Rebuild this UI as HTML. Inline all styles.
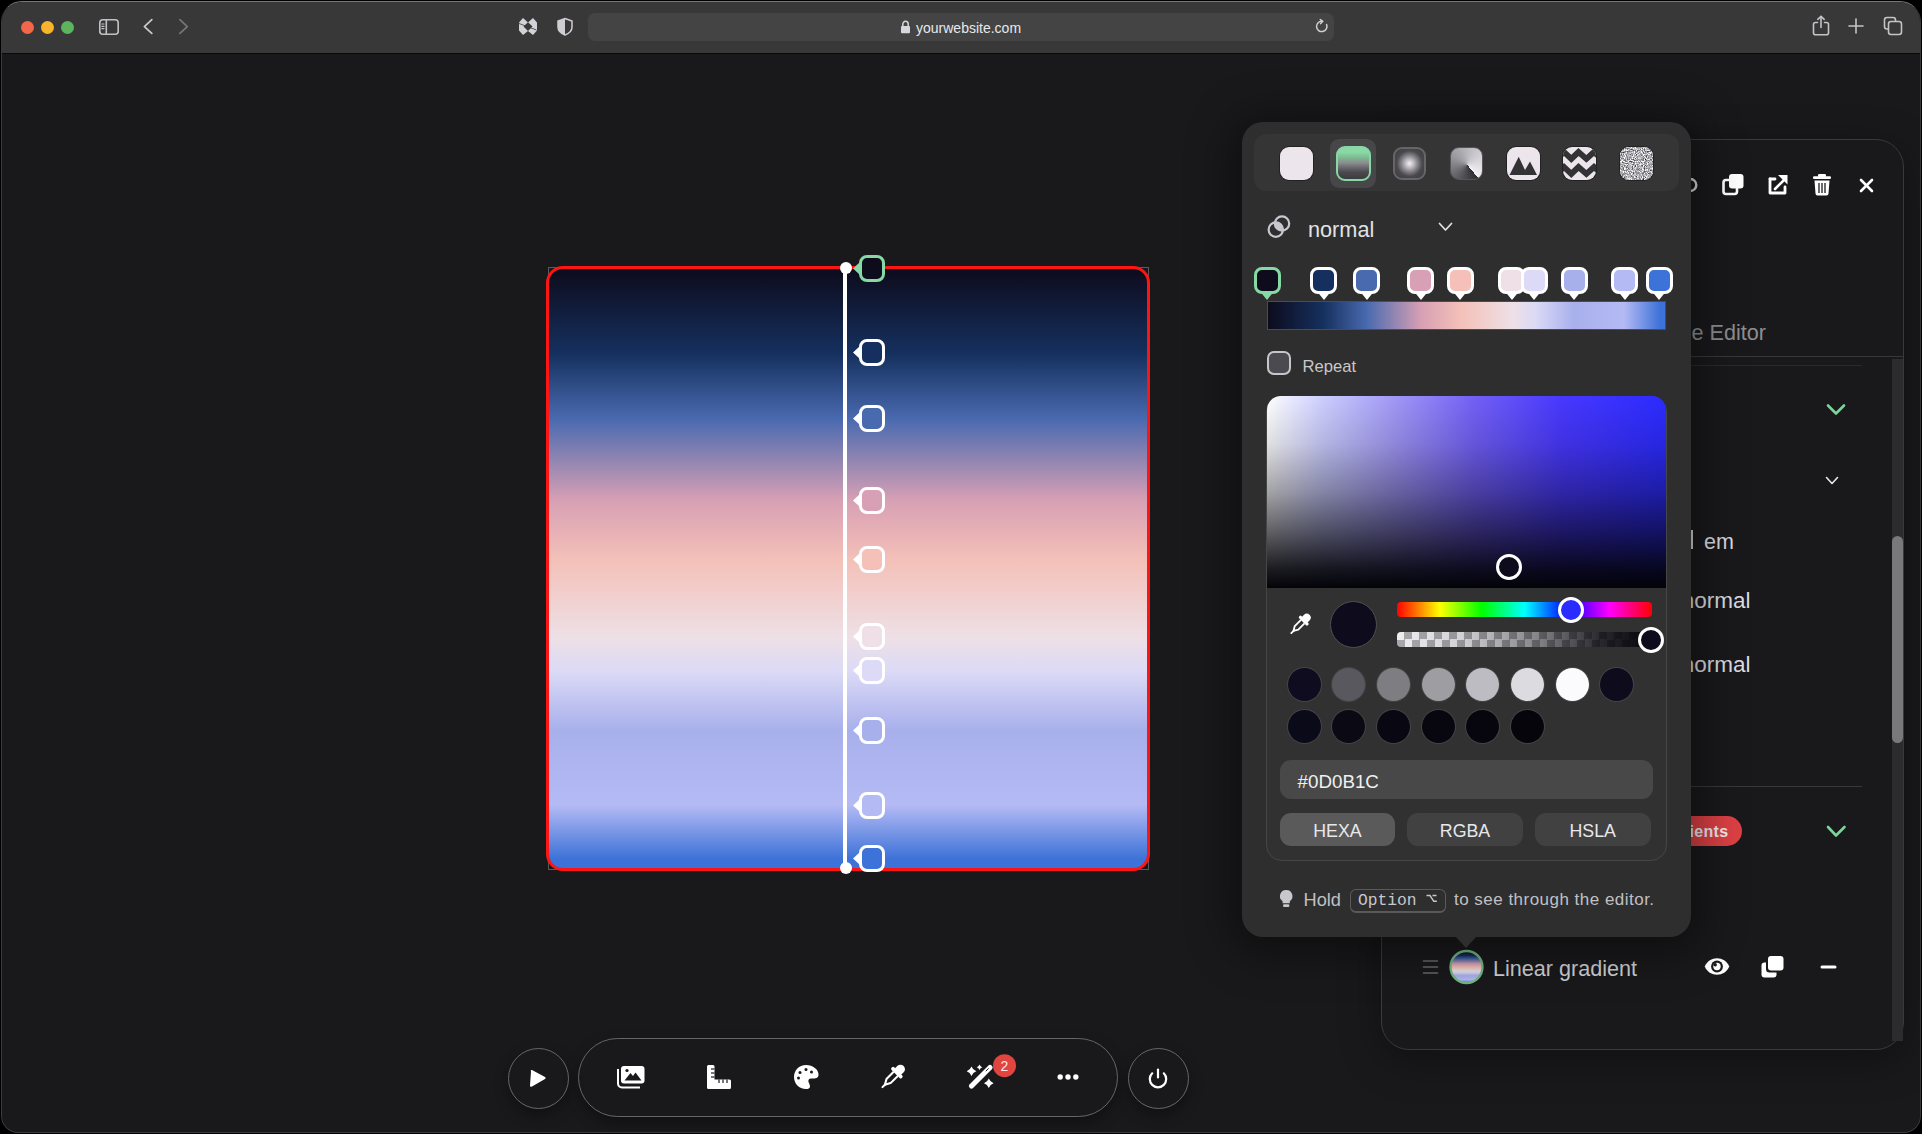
<!DOCTYPE html>
<html><head><meta charset="utf-8">
<style>
*{box-sizing:border-box;margin:0;padding:0}
html,body{width:1922px;height:1134px;overflow:hidden;background:#000;font-family:"Liberation Sans",sans-serif}
.a{position:absolute}
#win{position:absolute;left:1px;top:1px;width:1920px;height:1132px;border-radius:21px 21px 17px 17px;overflow:hidden;background:#19191b;border:1px solid #3a3a3c;border-top-color:#77777b}
#tb{position:absolute;left:0;top:0;width:1918px;height:51px;background:#383838}
#tbline{position:absolute;left:0;top:51px;width:1918px;height:1px;background:#08080c}
.tl{position:absolute;width:13px;height:13px;border-radius:50%}
svg{position:absolute;overflow:visible}
.t{position:absolute;white-space:nowrap;line-height:1}
</style></head><body>
<div id="win"><div id="tb"></div><div id="tbline"></div></div>
<!-- ============ BROWSER TOOLBAR ============ -->
<div class="tl" style="left:21px;top:21px;background:#f2674a"></div>
<div class="tl" style="left:41px;top:21px;background:#f7b42c"></div>
<div class="tl" style="left:61px;top:21px;background:#5cb45e"></div>
<div class="a" style="left:588px;top:13px;width:746px;height:28px;border-radius:7px;background:#444444"></div>
<div class="t" style="left:916px;top:20.5px;font-size:14px;color:#e8e8ea;">yourwebsite.com</div>
<svg style="left:0;top:0" width="1922" height="60">
  <g fill="none" stroke="#c2c2c6" stroke-width="1.6" stroke-linecap="round" stroke-linejoin="round">
    <rect x="99.8" y="19.8" width="18.4" height="14.4" rx="3"/>
    <line x1="106.3" y1="20" x2="106.3" y2="34"/>
    <line x1="101.8" y1="24" x2="104" y2="24" stroke-width="1.2"/>
    <line x1="101.8" y1="26.3" x2="104" y2="26.3" stroke-width="1.2"/>
    <line x1="101.8" y1="28.6" x2="104" y2="28.6" stroke-width="1.2"/>
    <polyline points="151.8,19.6 144.4,26.6 151.8,33.4" stroke="#c8c8cc" stroke-width="1.8"/>
    <polyline points="179.9,19.6 187.3,26.6 179.9,33.4" stroke="#76767a" stroke-width="1.8"/>
  </g>
  <path d="M523,18 L528,22.5 L533,18 L537,22.5 L537,30.5 L533,35 L528,31 L523,35 L519,30.5 L519,22.5 Z" fill="#d4d2d8"/>
  <polygon points="523.5,26.5 528,22.3 532.5,26.5 528,31" fill="#383838"/>
  <line x1="519" y1="23.5" x2="536.5" y2="30" stroke="#383838" stroke-width="0.8"/>
  <path d="M565,18.5 L572,21 L572,27 C572,31 569,33.5 565,35 C561,33.5 558,31 558,27 L558,21 Z" fill="none" stroke="#cfcdd3" stroke-width="1.5"/>
  <path d="M565,18.5 L558,21 L558,27 C558,31 561,33.5 565,35 Z" fill="#cfcdd3"/>
  <rect x="901" y="26" width="9" height="7.3" rx="1" fill="#d8d8dc"/>
  <path d="M902.8,26.5 V24.2 A2.7,2.9 0 0 1 908.2,24.2 V26.5" fill="none" stroke="#d8d8dc" stroke-width="1.5"/>
  <path d="M1326.6,24.5 A5.2,5.2 0 1 1 1322.2,21.2" fill="none" stroke="#d0d0d4" stroke-width="1.5" stroke-linecap="round"/>
  <polyline points="1320.3,19.6 1322.8,21.3 1320.6,23.6" fill="none" stroke="#d0d0d4" stroke-width="1.5" stroke-linecap="round" stroke-linejoin="round"/>
  <g fill="none" stroke="#c4c4c8" stroke-width="1.6" stroke-linecap="round" stroke-linejoin="round">
    <path d="M1817.5,22.5 H1815.5 A2,2 0 0 0 1813.5,24.5 V32.7 A2,2 0 0 0 1815.5,34.7 H1826.5 A2,2 0 0 0 1828.5,32.7 V24.5 A2,2 0 0 0 1826.5,22.5 H1824.5"/>
    <line x1="1821" y1="16.5" x2="1821" y2="27.5"/>
    <polyline points="1817.8,19.3 1821,16.3 1824.2,19.3"/>
    <line x1="1856" y1="19" x2="1856" y2="33"/>
    <line x1="1849" y1="26" x2="1863" y2="26"/>
    <rect x="1884.5" y="17.5" width="11" height="11.5" rx="2.5"/>
    <rect x="1888.5" y="21.5" width="13" height="13" rx="2.5" fill="#383838"/>
  </g>
</svg>
<!-- ============ CANVAS ============ -->
<div class="a" style="left:548px;top:267px;width:601px;height:603px;border:1px solid #5a5a5c"></div>
<div class="a" style="left:546px;top:266px;width:604px;height:605px;border:3px solid #ff1414;border-radius:17px;overflow:hidden;
 background:linear-gradient(to bottom,#0d0b1c 0%,#15305e 14.1%,#4a6ab0 25.1%,#d8a0b4 38.7%,#f4c0b8 48.5%,#eee0e6 61.5%,#dcdaf6 67.1%,#a8b0ec 77%,#b4baf4 89.5%,#3d72d8 98.5%)"></div>
<div class="a" style="left:843px;top:268px;width:4px;height:600px;background:#fff"></div>
<div class="a" style="left:840px;top:262px;width:12px;height:12px;border-radius:50%;background:#fff"></div>
<div class="a" style="left:840px;top:862px;width:12px;height:12px;border-radius:50%;background:#fff"></div>

<svg style="left:852px;top:255.1px" width="34" height="27"><polygon points="1,13.5 8,7 8,20" fill="#86d8a4"/></svg>
<div class="a" style="left:859px;top:255.1px;width:26px;height:27px;border:3px solid #86d8a4;border-radius:8px;background:#0d0b1c"></div>
<svg style="left:852px;top:339.0px" width="34" height="27"><polygon points="1,13.5 8,7 8,20" fill="#ffffff"/></svg>
<div class="a" style="left:859px;top:339.0px;width:26px;height:27px;border:3px solid #ffffff;border-radius:8px;background:#15305e"></div>
<svg style="left:852px;top:405.1px" width="34" height="27"><polygon points="1,13.5 8,7 8,20" fill="#ffffff"/></svg>
<div class="a" style="left:859px;top:405.1px;width:26px;height:27px;border:3px solid #ffffff;border-radius:8px;background:#4a6ab0"></div>
<svg style="left:852px;top:486.5px" width="34" height="27"><polygon points="1,13.5 8,7 8,20" fill="#ffffff"/></svg>
<div class="a" style="left:859px;top:486.5px;width:26px;height:27px;border:3px solid #ffffff;border-radius:8px;background:#d8a0b4"></div>
<svg style="left:852px;top:545.5px" width="34" height="27"><polygon points="1,13.5 8,7 8,20" fill="#ffffff"/></svg>
<div class="a" style="left:859px;top:545.5px;width:26px;height:27px;border:3px solid #ffffff;border-radius:8px;background:#f4c0b8"></div>
<svg style="left:852px;top:623.2px" width="34" height="27"><polygon points="1,13.5 8,7 8,20" fill="#ffffff"/></svg>
<div class="a" style="left:859px;top:623.2px;width:26px;height:27px;border:3px solid #ffffff;border-radius:8px;background:#eee0e6"></div>
<svg style="left:852px;top:657.2px" width="34" height="27"><polygon points="1,13.5 8,7 8,20" fill="#ffffff"/></svg>
<div class="a" style="left:859px;top:657.2px;width:26px;height:27px;border:3px solid #ffffff;border-radius:8px;background:#dcdaf6"></div>
<svg style="left:852px;top:716.5px" width="34" height="27"><polygon points="1,13.5 8,7 8,20" fill="#ffffff"/></svg>
<div class="a" style="left:859px;top:716.5px;width:26px;height:27px;border:3px solid #ffffff;border-radius:8px;background:#a8b0ec"></div>
<svg style="left:852px;top:791.5px" width="34" height="27"><polygon points="1,13.5 8,7 8,20" fill="#ffffff"/></svg>
<div class="a" style="left:859px;top:791.5px;width:26px;height:27px;border:3px solid #ffffff;border-radius:8px;background:#b4baf4"></div>
<svg style="left:852px;top:845.3px" width="34" height="27"><polygon points="1,13.5 8,7 8,20" fill="#ffffff"/></svg>
<div class="a" style="left:859px;top:845.3px;width:26px;height:27px;border:3px solid #ffffff;border-radius:8px;background:#3d72d8"></div>
<!-- ============ RIGHT PANEL (behind popup) ============ -->
<div class="a" style="left:1381px;top:139px;width:523px;height:911px;border:1px solid #3a3a3c;border-radius:28px;background:#19191b;box-shadow:0 10px 40px rgba(0,0,0,0.35)"></div>
<div class="a" style="left:1382px;top:356px;width:521px;height:1px;background:#38383a"></div>
<div class="a" style="left:1382px;top:365px;width:480px;height:1px;background:#2a2a2c"></div>
<div class="a" style="left:1382px;top:786px;width:480px;height:1px;background:#38383a"></div>
<div class="a" style="left:1892px;top:359px;width:11px;height:682px;background:#2c2c2e"></div>
<div class="a" style="left:1892px;top:536px;width:11px;height:207px;border-radius:6px;background:#79797b"></div>
<div class="t" style="left:1691.5px;top:321.5px;font-size:21.6px;color:#8e8e92">e Editor</div>
<div class="a" style="left:1690px;top:530px;width:3px;height:19px;background:#d0d0d4"></div>
<div class="t" style="left:1704px;top:532px;font-size:21.5px;color:#dcdce0">em</div>
<div class="t" style="left:1550.5px;top:590px;width:200px;text-align:right;font-size:22.5px;color:#dcdce0">normal</div>
<div class="t" style="left:1550.5px;top:654px;width:200px;text-align:right;font-size:22.5px;color:#dcdce0">normal</div>
<div class="a" style="left:1600px;top:816px;width:141.5px;height:30px;border-radius:15px;background:#dc4044"></div>
<div class="t" style="left:1689.5px;top:824px;font-size:16px;font-weight:bold;color:#ecebf0;letter-spacing:0.3px">ients</div>
<svg style="left:0;top:0" width="1922" height="1134">
  <g fill="none" stroke-linecap="round" stroke-linejoin="round">
    <polyline points="1828,405.5 1836,413.5 1844,405.5" stroke="#7cd49b" stroke-width="2.6"/>
    <polyline points="1826.5,477.5 1832,483.5 1837.5,477.5" stroke="#e8e8ea" stroke-width="1.6"/>
    <polyline points="1828,827 1836,835.5 1844.5,827" stroke="#7cd49b" stroke-width="2.6"/>
    <circle cx="1690.3" cy="185" r="6" stroke="#d8d8dc" stroke-width="2.4"/>
    <line x1="1861" y1="180" x2="1872" y2="191" stroke="#ffffff" stroke-width="2.6"/>
    <line x1="1872" y1="180" x2="1861" y2="191" stroke="#ffffff" stroke-width="2.6"/>
    <path d="M1770,179 V193 H1785 V187" stroke="#ffffff" stroke-width="2.8"/>
    <path d="M1770,179 H1775" stroke="#ffffff" stroke-width="2.8"/>
    <line x1="1775" y1="189" x2="1785" y2="179" stroke="#ffffff" stroke-width="2.6"/>
    <line x1="1822" y1="967" x2="1835" y2="967" stroke="#ffffff" stroke-width="3"/>
    <g stroke="#6a6a6e" stroke-width="1.6"><line x1="1423.5" y1="961" x2="1437.5" y2="961"/><line x1="1423.5" y1="967" x2="1437.5" y2="967"/><line x1="1423.5" y1="973" x2="1437.5" y2="973"/></g>
  </g>
  <polygon points="1778,175 1787.5,175 1787.5,184.5" fill="#ffffff"/>
  <!-- duplicate top -->
  <rect x="1723.5" y="180" width="13.5" height="14" rx="2.5" fill="none" stroke="#ffffff" stroke-width="2.6"/>
  <rect x="1729" y="174" width="14.5" height="14.5" rx="3" fill="#ffffff"/>
  <!-- trash -->
  <rect x="1813" y="176.3" width="18" height="2.6" rx="1.2" fill="#ffffff"/>
  <rect x="1818" y="174" width="8" height="3" rx="1.2" fill="#ffffff"/>
  <path d="M1814.5,180.5 H1829.5 L1828.5,193.5 A2,2 0 0 1 1826.5,195.5 H1817.5 A2,2 0 0 1 1815.5,193.5 Z" fill="#ffffff"/>
  <g stroke="#1a1a1c" stroke-width="1.3"><line x1="1819" y1="183" x2="1819" y2="193"/><line x1="1822" y1="183" x2="1822" y2="193"/><line x1="1825" y1="183" x2="1825" y2="193"/></g>
  <!-- eye -->
  <path d="M1704.8,966.5 C1709,955.5 1725,955.5 1729.2,966.5 C1725,977.5 1709,977.5 1704.8,966.5 Z" fill="#ffffff"/>
  <circle cx="1717" cy="966.5" r="5.9" fill="#1a1a1c"/>
  <circle cx="1717" cy="966.5" r="3.7" fill="#ffffff"/>
  <circle cx="1715.2" cy="964.8" r="1.7" fill="#1a1a1c"/>
  <!-- duplicate bottom -->
  <rect x="1761.5" y="962.5" width="15" height="15" rx="3" fill="#ffffff"/>
  <rect x="1766" y="955.5" width="18" height="17" rx="3.5" fill="#1a1a1c"/>
  <rect x="1768" y="956" width="15.5" height="14.5" rx="3" fill="#ffffff"/>
  <!-- gradient circle -->
  <defs><linearGradient id="lg1" x1="0" y1="0" x2="0" y2="1">
    <stop offset="0" stop-color="#0d0b1c"/><stop offset="0.14" stop-color="#15305e"/><stop offset="0.25" stop-color="#4a6ab0"/>
    <stop offset="0.39" stop-color="#d8a0b4"/><stop offset="0.49" stop-color="#f4c0b8"/><stop offset="0.62" stop-color="#eee0e6"/>
    <stop offset="0.67" stop-color="#dcdaf6"/><stop offset="0.77" stop-color="#a8b0ec"/><stop offset="0.9" stop-color="#b4baf4"/><stop offset="1" stop-color="#3d72d8"/>
  </linearGradient></defs>
  <circle cx="1466.5" cy="967" r="16" fill="url(#lg1)" stroke="#74b884" stroke-width="2.4"/>
</svg>
<div class="t" style="left:1493px;top:958px;font-size:21.6px;color:#d0d0d4">Linear gradient</div>
<!-- ============ POPUP ============ -->
<div class="a" style="left:1242px;top:122px;width:449px;height:815px;border-radius:21px;background:#2e2e2e;box-shadow:0 6px 44px 12px rgba(0,0,0,0.4)"></div>
<svg style="left:1450px;top:936px" width="32" height="14"><polygon points="5,0 27,0 16,12" fill="#2e2e2e"/></svg>
<div class="a" style="left:1254px;top:134px;width:425px;height:57px;border-radius:12px;background:#353535"></div>
<div class="a" style="left:1330px;top:139px;width:46px;height:49px;border-radius:9px;background:#47474a"></div>
<div style="position:absolute;top:147px;width:33px;height:33px;border-radius:9px;left:1280px;background:#ede5ec;box-shadow:0 0 0 1px rgba(0,0,0,0.35)"></div>
<div style="position:absolute;top:147px;width:33px;height:33px;border-radius:9px;left:1336px;width:35px;height:35px;top:146px;border:2px solid #86d8a4;background:linear-gradient(#8ad8a6 0%,#8ad8a6 14%,#7cb88e 32%,#8c8c90 48%,#6c6c70 62%,#4a4a4e 78%,#3c3c40 100%)"></div>
<div style="position:absolute;top:147px;width:33px;height:33px;border-radius:9px;left:1393px;border:2px solid #66666a;background:radial-gradient(circle at 50% 50%,#f4eef4 0%,#d0ccd2 14%,#8a888e 38%,#4a4a4e 62%,#3a3a3c 100%)"></div>
<div style="position:absolute;top:147px;width:33px;height:33px;border-radius:9px;left:1450px;border:1px solid #555558;background:conic-gradient(from 140deg at 52% 54%,#2e2e32 0%,#5a5a5e 20%,#9a9a9e 45%,#c8c6cc 70%,#f2f0f4 100%)"></div>
<div style="position:absolute;top:147px;width:33px;height:33px;border-radius:9px;left:1507px;background:#ede5ec;box-shadow:0 0 0 1px rgba(0,0,0,0.35);overflow:hidden"><svg style="left:0;top:0" width="33" height="33"><polygon points="2.5,28 11.7,9.8 18,23 23,14.5 30,28" fill="#333335"/></svg></div>
<div style="position:absolute;top:147px;width:33px;height:33px;border-radius:9px;left:1563px;background:#ede5ec;box-shadow:0 0 0 1px rgba(0,0,0,0.35);overflow:hidden"><svg style="left:0;top:0" width="33" height="33"><polyline points="-6.5,11.9 1,5 8.3,11.9 15.5,5 23.4,11.9 31,5 38.5,11.9" fill="none" stroke="#333335" stroke-width="5.9"/><polyline points="-6.5,26.9 1,20 8.3,26.9 15.5,20 23.4,26.9 31,20 38.5,26.9" fill="none" stroke="#333335" stroke-width="5.9"/></svg></div>
<div style="position:absolute;top:147px;width:33px;height:33px;border-radius:9px;left:1620px;overflow:hidden;background:#b4b2b8;box-shadow:0 0 0 1px rgba(0,0,0,0.35)"><svg style="left:0;top:0" width="33" height="33"><filter id="nz" x="0" y="0" width="100%" height="100%" color-interpolation-filters="sRGB"><feTurbulence type="fractalNoise" baseFrequency="0.9" numOctaves="2" seed="3"/><feColorMatrix type="matrix" values="1.6 0 0 0 -0.12  1.6 0 0 0 -0.12  1.6 0 0 0 -0.1  0 0 0 0 1"/></filter><rect width="33" height="33" fill="#d8d6dc"/><rect width="33" height="33" filter="url(#nz)"/></svg></div>
<svg style="left:0;top:0" width="1922" height="1134">
<defs><clipPath id="cpA"><circle cx="1275.8" cy="229.6" r="7.2"/></clipPath></defs>
<circle cx="1282" cy="223.5" r="7.2" fill="#c8c6ce" clip-path="url(#cpA)"/>
<circle cx="1275.8" cy="229.6" r="7.2" fill="none" stroke="#c8c6ce" stroke-width="2.2"/>
<circle cx="1282" cy="223.5" r="7.2" fill="none" stroke="#c8c6ce" stroke-width="2.2"/>
<polyline points="1439.5,223.5 1445.5,230 1451.5,223.5" fill="none" stroke="#e4e4e8" stroke-width="1.7" stroke-linecap="round" stroke-linejoin="round"/>
</svg>
<div class="t" style="left:1308px;top:218.8px;font-size:21.7px;color:#e2e2e6">normal</div>
<div class="a" style="left:1267px;top:301px;width:399px;height:29px;border:1px solid #4c4c4e;background:linear-gradient(to right,#0d0b1c 0.0%,#15305e 14.1%,#4a6ab0 25.1%,#d8a0b4 38.7%,#f4c0b8 48.5%,#eee0e6 61.5%,#dcdaf6 67.1%,#a8b0ec 77.0%,#b4baf4 89.5%,#3d72d8 98.5%);background-origin:border-box"></div>
<svg style="left:1259.2px;top:290px" width="16" height="11"><polygon points="1.5,2 14.5,2 8,10" fill="#86d8a4"/></svg>
<div class="a" style="left:1253.7px;top:267px;width:27px;height:27px;border:3px solid #86d8a4;border-radius:8px;background:#0d0b1c"></div>
<svg style="left:1315.5px;top:290px" width="16" height="11"><polygon points="1.5,2 14.5,2 8,10" fill="#ffffff"/></svg>
<div class="a" style="left:1310.0px;top:267px;width:27px;height:27px;border:3px solid #ffffff;border-radius:8px;background:#15305e"></div>
<svg style="left:1358.7px;top:290px" width="16" height="11"><polygon points="1.5,2 14.5,2 8,10" fill="#ffffff"/></svg>
<div class="a" style="left:1353.2px;top:267px;width:27px;height:27px;border:3px solid #ffffff;border-radius:8px;background:#4a6ab0"></div>
<svg style="left:1412.7px;top:290px" width="16" height="11"><polygon points="1.5,2 14.5,2 8,10" fill="#ffffff"/></svg>
<div class="a" style="left:1407.2px;top:267px;width:27px;height:27px;border:3px solid #ffffff;border-radius:8px;background:#d8a0b4"></div>
<svg style="left:1452.3px;top:290px" width="16" height="11"><polygon points="1.5,2 14.5,2 8,10" fill="#ffffff"/></svg>
<div class="a" style="left:1446.8px;top:267px;width:27px;height:27px;border:3px solid #ffffff;border-radius:8px;background:#f4c0b8"></div>
<svg style="left:1503.8px;top:290px" width="16" height="11"><polygon points="1.5,2 14.5,2 8,10" fill="#ffffff"/></svg>
<div class="a" style="left:1498.3px;top:267px;width:27px;height:27px;border:3px solid #ffffff;border-radius:8px;background:#eee0e6"></div>
<svg style="left:1526.3px;top:290px" width="16" height="11"><polygon points="1.5,2 14.5,2 8,10" fill="#ffffff"/></svg>
<div class="a" style="left:1520.8px;top:267px;width:27px;height:27px;border:3px solid #ffffff;border-radius:8px;background:#dcdaf6"></div>
<svg style="left:1566.3px;top:290px" width="16" height="11"><polygon points="1.5,2 14.5,2 8,10" fill="#ffffff"/></svg>
<div class="a" style="left:1560.8px;top:267px;width:27px;height:27px;border:3px solid #ffffff;border-radius:8px;background:#a8b0ec"></div>
<svg style="left:1616.6px;top:290px" width="16" height="11"><polygon points="1.5,2 14.5,2 8,10" fill="#ffffff"/></svg>
<div class="a" style="left:1611.1px;top:267px;width:27px;height:27px;border:3px solid #ffffff;border-radius:8px;background:#b4baf4"></div>
<svg style="left:1651.4px;top:290px" width="16" height="11"><polygon points="1.5,2 14.5,2 8,10" fill="#ffffff"/></svg>
<div class="a" style="left:1645.9px;top:267px;width:27px;height:27px;border:3px solid #ffffff;border-radius:8px;background:#3d72d8"></div>
<div class="a" style="left:1267px;top:351px;width:24px;height:24px;border:2px solid #c6c6ca;border-radius:7px;background:#4a4a50"></div>
<div class="t" style="left:1302.5px;top:358.8px;font-size:16.6px;color:#c8c8cc">Repeat</div>
<div class="a" style="left:1266px;top:396px;width:401px;height:465px;border-radius:16px;background:#313131;border:1px solid #464648"></div>
<div class="a" style="left:1267px;top:396px;width:399px;height:192px;border-radius:14px 14px 0 0;background:linear-gradient(to top,#030308 0%,rgba(3,3,8,0.9) 10%,rgba(3,3,8,0.62) 30%,rgba(3,3,8,0.36) 50%,rgba(3,3,8,0.12) 75%,rgba(3,3,8,0) 100%),linear-gradient(to right,#fff 0%,#ccceff 14%,#a198f6 32%,#7260f6 52%,#4838ff 74%,#2b2bff 100%)"></div>
<div class="a" style="left:1496px;top:554px;width:26px;height:26px;border-radius:50%;border:3px solid #fff;background:#0d0b1c"></div>
<svg style="left:0;top:0" width="1922" height="1134">
<g transform="translate(1300.2,624.2) rotate(45)">
<path d="M-3.9,-6 V-9.3 A3.9,3.9 0 0 1 3.9,-9.3 V-6 Z" fill="#ffffff"/>
<rect x="-6.2" y="-6.6" width="12.4" height="3.2" rx="1.3" fill="#ffffff"/>
<path d="M-2.5,-3.6 V5.2 L0,9.6 L2.5,5.2 V-3.6" fill="none" stroke="#ffffff" stroke-width="1.8" stroke-linejoin="round"/>
<line x1="0" y1="9" x2="0" y2="12.6" stroke="#ffffff" stroke-width="1.8" stroke-linecap="round"/>
</g>
</svg>
<div class="a" style="left:1330px;top:601px;width:47px;height:47px;border-radius:50%;background:#0d0b1c;border:1px solid #505052"></div>
<div class="a" style="left:1397px;top:602px;width:255px;height:15px;border-radius:4px;background:linear-gradient(to right,#ff0000 0%,#ffff00 16.7%,#00ff00 33.3%,#00ffff 50%,#0000ff 66.7%,#ff00ff 83.3%,#ff0000 100%)"></div>
<div class="a" style="left:1397px;top:632px;width:255px;height:15px;border-radius:4px;background:linear-gradient(to right,rgba(6,5,12,0) 0%,rgba(6,5,12,0.12) 25%,rgba(6,5,12,0.45) 55%,rgba(6,5,12,0.85) 80%,#06050c 100%),repeating-conic-gradient(#a8a8ac 0 25%,#eeeeee 0 50%) 0 0/15px 15px"></div>
<div class="a" style="left:1558px;top:597px;width:26px;height:26px;border-radius:50%;border:3px solid #fff;background:#2b2bff"></div>
<div class="a" style="left:1638px;top:627px;width:26px;height:26px;border-radius:50%;border:3px solid #fff;background:#0d0b1c"></div>
<div class="a" style="left:1287.5px;top:667.5px;width:33px;height:33px;border-radius:50%;background:#0e0c1e;box-shadow:0 0 0 1px rgba(80,80,84,0.6)"></div>
<div class="a" style="left:1332.0px;top:667.5px;width:33px;height:33px;border-radius:50%;background:#58585e;box-shadow:0 0 0 1px rgba(80,80,84,0.6)"></div>
<div class="a" style="left:1376.5px;top:667.5px;width:33px;height:33px;border-radius:50%;background:#7d7d82;box-shadow:0 0 0 1px rgba(80,80,84,0.6)"></div>
<div class="a" style="left:1421.5px;top:667.5px;width:33px;height:33px;border-radius:50%;background:#9d9da2;box-shadow:0 0 0 1px rgba(80,80,84,0.6)"></div>
<div class="a" style="left:1465.5px;top:667.5px;width:33px;height:33px;border-radius:50%;background:#bcbcc2;box-shadow:0 0 0 1px rgba(80,80,84,0.6)"></div>
<div class="a" style="left:1510.5px;top:667.5px;width:33px;height:33px;border-radius:50%;background:#dcdce0;box-shadow:0 0 0 1px rgba(80,80,84,0.6)"></div>
<div class="a" style="left:1555.5px;top:667.5px;width:33px;height:33px;border-radius:50%;background:#fbfbfd;box-shadow:0 0 0 1px rgba(80,80,84,0.6)"></div>
<div class="a" style="left:1599.5px;top:667.5px;width:33px;height:33px;border-radius:50%;background:#0d0b1c;box-shadow:0 0 0 1px rgba(80,80,84,0.6)"></div>
<div class="a" style="left:1287.5px;top:709.7px;width:33px;height:33px;border-radius:50%;background:#0b0a18;box-shadow:0 0 0 1px rgba(80,80,84,0.6)"></div>
<div class="a" style="left:1332.0px;top:709.7px;width:33px;height:33px;border-radius:50%;background:#0a0914;box-shadow:0 0 0 1px rgba(80,80,84,0.6)"></div>
<div class="a" style="left:1376.5px;top:709.7px;width:33px;height:33px;border-radius:50%;background:#090812;box-shadow:0 0 0 1px rgba(80,80,84,0.6)"></div>
<div class="a" style="left:1421.5px;top:709.7px;width:33px;height:33px;border-radius:50%;background:#080710;box-shadow:0 0 0 1px rgba(80,80,84,0.6)"></div>
<div class="a" style="left:1465.5px;top:709.7px;width:33px;height:33px;border-radius:50%;background:#07060e;box-shadow:0 0 0 1px rgba(80,80,84,0.6)"></div>
<div class="a" style="left:1510.5px;top:709.7px;width:33px;height:33px;border-radius:50%;background:#06050c;box-shadow:0 0 0 1px rgba(80,80,84,0.6)"></div>
<div class="a" style="left:1280px;top:760px;width:373px;height:39px;border-radius:11px;background:#484848"></div>
<div class="t" style="left:1297.5px;top:772.5px;font-size:18.8px;color:#f0f0f2">#0D0B1C</div>
<div class="a" style="left:1280px;top:813px;width:115.0px;height:33px;border-radius:11px;background:#5a5a5a"></div>
<div class="t" style="left:1280px;top:822.5px;width:115.0px;text-align:center;font-size:17.8px;color:#e8e8ec">HEXA</div>
<div class="a" style="left:1407px;top:813px;width:116.0px;height:33px;border-radius:11px;background:#414141"></div>
<div class="t" style="left:1407px;top:822.5px;width:116.0px;text-align:center;font-size:17.8px;color:#e8e8ec">RGBA</div>
<div class="a" style="left:1535px;top:813px;width:115.5px;height:33px;border-radius:11px;background:#414141"></div>
<div class="t" style="left:1535px;top:822.5px;width:115.5px;text-align:center;font-size:17.8px;color:#e8e8ec">HSLA</div>
<svg style="left:0;top:0" width="1922" height="1134">
<path d="M1286.2,890 a6.2,6.2 0 0 1 3.6,11.3 v2 h-7.2 v-2 a6.2,6.2 0 0 1 3.6,-11.3 Z" fill="#c8c8cc"/>
<rect x="1283" y="904.3" width="6.4" height="2.8" rx="1.3" fill="#c8c8cc"/>
<path d="M1426.5,895.5 h3.5 l3.8,5.8 h3" fill="none" stroke="#c8c8cc" stroke-width="1.5"/>
<line x1="1432.5" y1="895.5" x2="1436.5" y2="895.5" stroke="#c8c8cc" stroke-width="1.5"/>
</svg>
<div class="t" style="left:1303.5px;top:891px;font-size:18.2px;color:#c0c0c4">Hold</div>
<div class="a" style="left:1349.5px;top:888.5px;width:96.5px;height:24px;border:1px solid #5a5a5c;border-bottom-width:2px;border-radius:6px"></div>
<div class="t" style="left:1358px;top:892.5px;font-family:'Liberation Mono',monospace;font-size:16.3px;color:#c8c8cc">Option</div>
<div class="t" style="left:1454px;top:891px;font-size:17px;letter-spacing:0.48px;color:#c0c0c4">to see through the editor.</div>
<!-- ============ BOTTOM TOOLBAR ============ -->
<div class="a" style="left:507.5px;top:1047.5px;width:61px;height:61px;border-radius:50%;border:1.5px solid #666668;box-shadow:0 6px 14px rgba(0,0,0,0.35)"></div>
<div class="a" style="left:578px;top:1037.5px;width:540px;height:79px;border-radius:40px;border:1.5px solid #666668;box-shadow:0 6px 14px rgba(0,0,0,0.35)"></div>
<div class="a" style="left:1127.5px;top:1047.5px;width:61px;height:61px;border-radius:50%;border:1.5px solid #666668;box-shadow:0 6px 14px rgba(0,0,0,0.35)"></div>
<svg style="left:0;top:0" width="1922" height="1134">
  <path d="M531,1071.5 Q530,1069.5 532,1070 L545,1077 Q546.5,1078 545,1079 L532,1086.5 Q530,1087.5 530,1085.5 Z" fill="#ffffff"/>
  <!-- images icon -->
  <rect x="621" y="1066" width="23.5" height="17.5" rx="3" fill="#ffffff"/>
  <path d="M618,1069 V1083.5 A4,4 0 0 0 622,1087.5 H640" fill="none" stroke="#ffffff" stroke-width="2"/>
  <circle cx="627" cy="1070.5" r="1.6" fill="#1a1a1c"/>
  <polygon points="624.5,1080.5 630.5,1073 633,1076 635.5,1072.5 641.5,1080.5" fill="#1a1a1c"/>
  <!-- ruler -->
  <path d="M707,1066.5 A1.5,1.5 0 0 1 708.5,1065 H713 A1.5,1.5 0 0 1 714.5,1066.5 V1079.5 H729.5 A1.5,1.5 0 0 1 731,1081 V1087.5 A1.5,1.5 0 0 1 729.5,1089 H708.5 A1.5,1.5 0 0 1 707,1087.5 Z" fill="#ffffff"/>
  <g stroke="#1a1a1c" stroke-width="1.2"><line x1="711" y1="1069" x2="714.5" y2="1069"/><line x1="711" y1="1073" x2="714.5" y2="1073"/><line x1="711" y1="1077" x2="714.5" y2="1077"/>
  <line x1="719" y1="1079.5" x2="719" y2="1083"/><line x1="723" y1="1079.5" x2="723" y2="1083"/><line x1="727" y1="1079.5" x2="727" y2="1083"/></g>
  <!-- palette -->
  <path d="M806,1065 C813,1065 818.5,1069.5 818.5,1074.5 C818.5,1077.5 816.5,1078.5 813.5,1078.5 H811 C809,1078.5 808,1080 808.5,1082 C809,1083.5 810,1084.5 810,1086.5 C810,1088.5 808,1089 806,1089 C799,1089 794,1083.5 794,1077 C794,1070.5 799,1065 806,1065 Z" fill="#ffffff"/>
  <g fill="#1a1a1c"><circle cx="798.5" cy="1078" r="1.5"/><circle cx="800" cy="1072.5" r="1.5"/><circle cx="806" cy="1069.5" r="1.5"/><circle cx="811.5" cy="1072" r="1.5"/></g>
  <!-- eyedropper -->
  <g transform="translate(892.8,1076.8) rotate(45) scale(1.16)">
  <path d="M-3.9,-6 V-9.3 A3.9,3.9 0 0 1 3.9,-9.3 V-6 Z" fill="#ffffff"/>
  <rect x="-6.2" y="-6.6" width="12.4" height="3.2" rx="1.3" fill="#ffffff"/>
  <path d="M-2.5,-3.6 V5.2 L0,9.6 L2.5,5.2 V-3.6" fill="none" stroke="#ffffff" stroke-width="1.8" stroke-linejoin="round"/>
  <line x1="0" y1="9" x2="0" y2="12.6" stroke="#ffffff" stroke-width="1.8" stroke-linecap="round"/>
  </g>
  <!-- wand -->
  <line x1="971.5" y1="1086" x2="990" y2="1067.5" stroke="#ffffff" stroke-width="5.2" stroke-linecap="round"/>
  <line x1="985.8" y1="1071.2" x2="988.6" y2="1068.4" stroke="#1a1a1c" stroke-width="1"/>
  <path d="M971.5,1066.4 Q972.844,1069.856 976.3,1071.2 Q972.844,1072.544 971.5,1076.0 Q970.156,1072.544 966.7,1071.2 Q970.156,1069.856 971.5,1066.4 Z" fill="#ffffff"/><path d="M979.5,1064.5 Q980.284,1066.5159999999998 982.3,1067.3 Q980.284,1068.084 979.5,1070.1 Q978.716,1068.084 976.7,1067.3 Q978.716,1066.5159999999998 979.5,1064.5 Z" fill="#ffffff"/><path d="M988.8,1078.4 Q990.144,1081.856 993.5999999999999,1083.2 Q990.144,1084.544 988.8,1088.0 Q987.4559999999999,1084.544 984.0,1083.2 Q987.4559999999999,1081.856 988.8,1078.4 Z" fill="#ffffff"/>
  <circle cx="1004.5" cy="1065.7" r="11.5" fill="#e0453f"/>
  <!-- dots -->
  <circle cx="1060.2" cy="1077" r="2.7" fill="#ffffff"/><circle cx="1068" cy="1077" r="2.7" fill="#ffffff"/><circle cx="1075.8" cy="1077" r="2.7" fill="#ffffff"/>
  <!-- power -->
  <path d="M1152.2,1073.3 A8.2,8.2 0 1 0 1163.8,1073.3" fill="none" stroke="#ffffff" stroke-width="2.2" stroke-linecap="round"/>
  <line x1="1158" y1="1069.5" x2="1158" y2="1077.5" stroke="#ffffff" stroke-width="2.2" stroke-linecap="round"/>
</svg>
<div class="t" style="left:993px;top:1058.5px;width:23px;text-align:center;font-size:14px;color:#ffe8e6">2</div>
</body></html>
